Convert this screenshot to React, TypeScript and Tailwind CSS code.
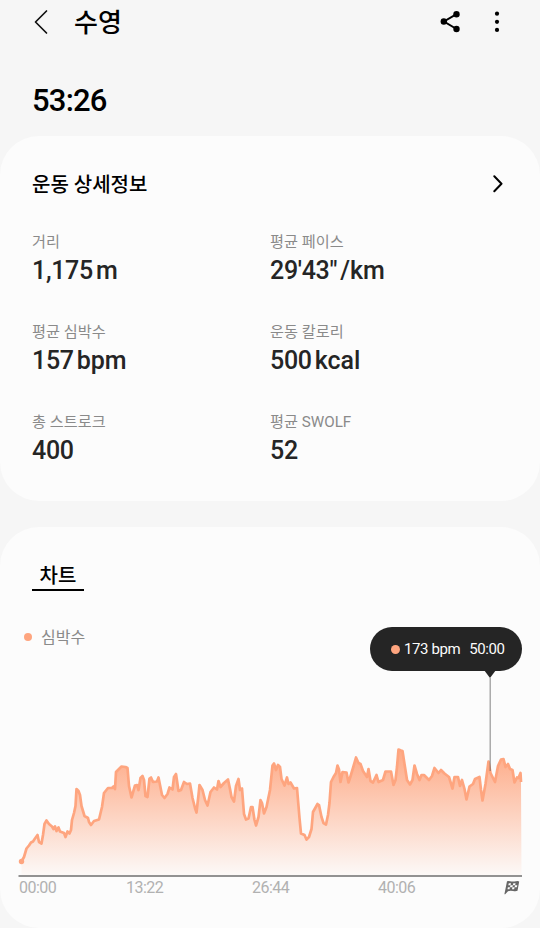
type Point = [number, number];

interface Stat {
  label: string;
  value: string;
  unit?: string;
}

const STATS: Stat[] = [
  { label: "거리", value: "1,175", unit: "m" },
  { label: "평균 페이스", value: "29'43\"", unit: "/km" },
  { label: "평균 심박수", value: "157", unit: "bpm" },
  { label: "운동 칼로리", value: "500", unit: "kcal" },
  { label: "총 스트로크", value: "400" },
  { label: "평균 SWOLF", value: "52" },
];

// Heart rate curve, in chart units (504 wide, baseline at 136)
const HEART_RATE: Point[] = [
  [3.5, 121.5], [6, 117], [8.5, 108.5], [11, 105.5], [13, 102.5], [15, 101.5], [17, 98.5], [19.5, 95], [21, 102], [23.5, 103.5], [25, 95], [26.5, 84],
  [28.5, 80.5], [31, 84], [34, 86.5], [35.5, 89], [37, 86.5], [38.5, 91], [40.5, 87.5], [42, 91.5], [46, 93], [47.5, 97], [49.5, 91.5], [51.5, 93.5],
  [53, 90], [54, 80], [56, 73], [57.5, 66], [58.5, 49], [60.5, 51], [62, 55], [63.5, 66], [66.5, 76], [70, 78], [71, 82], [73, 85], [76, 81], [81, 79.5],
  [84, 67], [86, 53], [90, 48], [94, 48], [95.5, 46.5], [97, 49], [98, 32], [100.5, 29.5], [103.5, 26.5], [107.5, 27], [109.5, 28], [111, 46], [113.5, 57.5],
  [117, 45.5], [119, 45], [120.5, 50], [122.5, 38], [124.5, 36], [126, 40], [127.5, 56], [129.5, 57], [131.5, 38.5], [133, 37.5], [135, 42], [139, 41.5], [140.5, 37.5],
  [142, 45], [144, 55], [146.5, 58], [149.5, 54], [151.5, 47.5], [154.5, 49.5], [156, 37], [158, 34], [160.5, 51], [163, 50], [166, 42], [169, 44], [172, 43.5],
  [174.5, 58], [177, 68], [178.5, 72.5], [180.5, 55], [181.5, 45], [184.5, 50], [187, 60], [189.5, 65.5], [192.5, 52], [196, 47.5], [199, 49.5], [200.5, 41],
  [202.5, 47], [206, 43], [210, 39.5], [212, 49], [213.5, 57], [216, 61.5], [218, 46], [220.5, 39], [222, 50], [224, 48.5], [226, 74], [228, 79.5], [230.5, 78.5],
  [233, 67], [234.5, 67], [236.5, 80], [238, 85.5], [240.5, 77], [242.5, 60], [244, 63], [246, 73.5], [248.5, 67], [252, 50], [254.5, 25.5], [256, 23.5],
  [258, 30], [260, 25], [262, 27], [263.5, 39], [266.5, 45.5], [269, 37.5], [270.5, 44], [272.5, 42.5], [276, 48.5], [279, 48], [280, 60], [281.5, 78],
  [283, 93.5], [286.5, 95], [288.5, 99.5], [291, 97], [293.5, 89], [295, 72], [299.5, 64], [301, 65], [303.5, 77], [305.5, 83], [308, 84.5], [310, 75], [311.5, 63],
  [313, 42], [315.5, 37], [318, 33], [319.5, 25.5], [321, 29.5], [322.5, 42], [324.5, 32], [328.5, 32.5], [330.5, 42.5], [332, 38], [335, 28],
  [338, 17.5], [340.5, 23], [342.5, 24], [345, 31], [349, 37], [350.5, 29], [352.5, 41], [355, 42.5], [358.5, 35], [360.5, 42], [365, 40], [367.5, 31.5],
  [373, 31.5], [375.5, 45], [377.5, 40], [379, 27], [380.5, 9.5], [383, 10.5], [384.5, 11], [386.5, 24], [389, 40], [392, 44.5], [394.5, 40], [396.5, 25.5],
  [399, 34], [401.5, 40], [403.5, 35], [406, 35], [411, 40], [414, 36], [416.5, 28], [420.5, 33], [423, 30], [426.5, 33.5], [431, 37], [434.5, 48.5], [436.5, 37],
  [440, 37], [442, 46], [444, 40], [446.5, 49], [448.5, 59.5], [451.5, 46.5], [455, 44], [457, 39], [461.5, 37], [463, 50], [464.5, 60.5], [467.5, 44],
  [470.5, 21.5], [472.5, 33], [477, 42], [480, 26], [483, 19.5], [485.5, 19], [487.5, 27], [490, 24], [492, 29], [494.5, 30], [496.5, 42.5], [499, 37.5], [500.5, 38], [502.5, 33], [503, 42],
];

const X_LABELS = ["00:00", "13:22", "26:44", "40:06"];

function toPath(points: Point[]) {
  return points.map(([x, y], i) => `${i === 0 ? "M" : "L"}${x} ${y}`).join(" ");
}

export default function App() {
  return (
    <div className="w-[540px] h-[928px] overflow-hidden bg-[#f6f6f6] text-black font-[Roboto,'Noto_Sans_CJK_KR',sans-serif]">
      <Header />
      <div className="h-[92px] pl-8 pt-[38px] text-[31px] leading-[38px] tracking-[-0.8px] font-medium">53:26</div>
      <DetailsCard />
      <ChartCard />
    </div>
  );
}

function Header() {
  return (
    <header className="flex items-center h-11 pl-[34px] pr-10">
      <svg width="14" height="26" viewBox="0 0 14 26" fill="none" stroke="#111" strokeWidth="1.7" strokeLinecap="round" strokeLinejoin="round">
        <path d="M12.5 2 1.5 13l11 11" />
      </svg>
      <h1 className="ml-[26px] pt-[2px] text-[26px] leading-[44px] font-medium">수영</h1>
      <svg className="ml-auto" width="20" height="22" viewBox="0 0 20 22">
        <path d="M16.5 3.2 4 10.5l12.5 7.5" fill="none" stroke="#000" strokeWidth="2" />
        <circle cx="16.5" cy="3.2" r="3.2" />
        <circle cx="3.8" cy="10.5" r="3.2" />
        <circle cx="16.5" cy="18" r="3.2" />
      </svg>
      <svg className="ml-[34px]" width="6" height="22" viewBox="0 0 6 22">
        <circle cx="3" cy="2.7" r="2.1" />
        <circle cx="3" cy="10.8" r="2.1" />
        <circle cx="3" cy="18.9" r="2.1" />
      </svg>
    </header>
  );
}

function DetailsCard() {
  return (
    <section className="h-[365px] rounded-[39px] bg-[#fcfcfc] px-8 pt-8">
      <div className="flex items-center justify-between pr-[5px]">
        <h2 className="pt-px text-[20px] leading-8 font-medium">운동 상세정보</h2>
        <svg className="-mt-[2px]" width="10" height="18" viewBox="0 0 10 18" fill="none" stroke="#000" strokeWidth="2" strokeLinecap="round" strokeLinejoin="round">
          <path d="M1.3 1.2 8.5 8.7l-7.2 7.5" />
        </svg>
      </div>
      <div className="grid grid-cols-2 mt-[29px]">
        {STATS.map((s) => (
          <div key={s.label} className="h-[90px]">
            <div className="text-[15.2px] leading-[25px] text-[#8a8a8a]">{s.label}</div>
            <div className="flex gap-[3px] text-[25px] leading-8 font-medium text-[#252525]">
              <span className="tracking-[-0.3px]">{s.value}</span>
              {s.unit && <span>{s.unit}</span>}
            </div>
          </div>
        ))}
      </div>
    </section>
  );
}

function ChartCard() {
  return (
    <section className="mt-[26px] h-[401px] rounded-[39px] bg-[#fcfcfc] pt-[34px]">
      <h2 className="ml-8 w-[52px] h-[30px] border-b-2 border-black text-center text-[20px] leading-[30px] font-medium">차트</h2>
      <div className="relative mx-[18px]">
        <div className="flex items-start gap-[9px] pl-[6px] pt-[34px]">
          <span className="mt-2 size-2 rounded-full bg-[#fea57f]" />
          <span className="pt-px text-[16px] leading-6 text-[#8a8a8a]">심박수</span>
        </div>
        <Tooltip />
        <HeartRateChart />
        <div className="flex items-start h-6 pl-px text-[16px] leading-6 tracking-[-0.5px] text-[#b1b1b1]">
          {X_LABELS.map((label) => (
            <span key={label} className="w-[126px] first:w-[107px]">
              {label}
            </span>
          ))}
          <FlagIcon />
        </div>
      </div>
    </section>
  );
}

function Tooltip() {
  return (
    <div className="absolute right-0 top-[36px] flex items-center w-[152px] h-[44px] rounded-full bg-[#252525] pl-[21px] text-[15px] tracking-[-0.4px] text-[#fcfcfc]">
      <span className="size-[9px] rounded-full bg-[#fea57f]" />
      <span className="ml-1 pt-px">173 bpm</span>
      <span className="ml-[9px] pt-px">50:00</span>
      <svg className="absolute left-[113px] top-[43px]" width="14" height="8" viewBox="0 0 14 8">
        <path d="M1 0h12L7 8z" fill="#252525" />
      </svg>
    </div>
  );
}

function HeartRateChart() {
  const line = toPath(HEART_RATE);
  return (
    <svg className="block mt-[90px] overflow-visible" width="504" height="136" viewBox="0 0 504 136">
      <defs>
        <linearGradient id="hr-fill" x1="0" y1="10" x2="0" y2="136" gradientUnits="userSpaceOnUse">
          <stop offset="0" stopColor="#fea57f" stopOpacity="0.95" />
          <stop offset="1" stopColor="#fea57f" stopOpacity="0.03" />
        </linearGradient>
      </defs>
      <path d={`${line} L503.5 136 L3.5 136 Z`} fill="url(#hr-fill)" />
      <path d={line} fill="none" stroke="#fea57f" strokeWidth="2.7" strokeLinejoin="round" />
      <circle cx="3.5" cy="121.5" r="2.7" fill="#fea57f" />
      <path d="M472.2-62V31" stroke="#555" strokeOpacity="0.6" strokeWidth="1.2" />
      <path d="M.5 136H504" stroke="#929292" strokeWidth="1.8" />
    </svg>
  );
}

function FlagIcon() {
  return (
    <svg className="mt-[5px]" width="16" height="14" viewBox="0 0 16 14">
      <path d="M3 .3q1.5-.6 3 0 3 .5 6 0 2-.6 3.200.2l-1.700 9.300q-1.500.7-4.500.2-3-.5-5 .2L1.200 13.300H.4z" fill="#666" />
      <path d="M4.800 2.200h2.200l-.5 2H4.300zM9.300 2.200h2.300l-.5 2H8.900zM6.500 4.200h2.400l-.5 2H6zM11.100 4.200h2.200l-.5 2h-2.200zM3.900 6.200H6l-.5 2H3.500zM8.400 6.200h2.200l-.5 2H8z" fill="#fcfcfc" />
    </svg>
  );
}
